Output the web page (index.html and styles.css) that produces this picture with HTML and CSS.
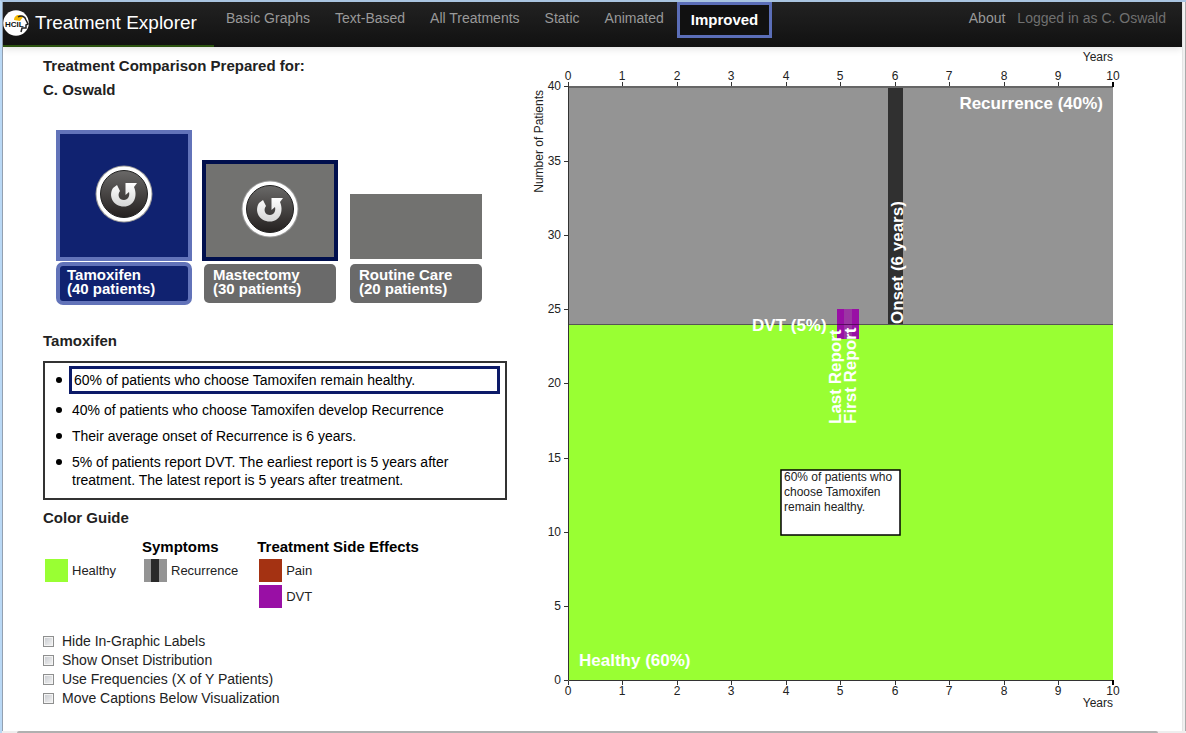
FILE: index.html
```html
<!DOCTYPE html>
<html lang="en">
<head>
<meta charset="utf-8">
<title>Treatment Explorer</title>
<link rel="stylesheet" href="styles.css">
</head>
<body>
<div class="frame">
  <div class="page">
    <header class="navbar">
      <a class="brand" href="#">
        <svg class="logo" width="26" height="26" viewBox="0 0 26 26" aria-hidden="true">
          <circle cx="13" cy="13" r="12.800" fill="#fff"/>
          <path d="M11 10c0-3 2-5 5-5 2 0 3 1 4 2l-3 4z" fill="#f5b800"/>
          <path d="M15 7c3-2 7-1 8 3l2 4-2 1v3h-4l-1 4" fill="none" stroke="#222" stroke-width="1.500"/>
          <text class="logo-text" x="2" y="17">HCIL</text>
        </svg>
        <span>Treatment Explorer</span>
      </a>
      <nav class="nav">
        <a href="#">Basic Graphs</a>
        <a href="#">Text-Based</a>
        <a href="#">All Treatments</a>
        <a href="#">Static</a>
        <a href="#">Animated</a>
        <a class="current" href="#">Improved</a>
      </nav>
      <div class="account"><a href="#">About</a><span>Logged in as C. Oswald</span></div>
    </header>

    <main class="content">
      <section class="panel">
        <h1>Treatment Comparison Prepared for:</h1>
        <h2>C. Oswald</h2>

        <div class="treatments">
          <button class="card chosen" type="button">
            <span class="tile tall"><svg class="replay" viewBox="0 0 58 58" aria-hidden="true">
              <defs><linearGradient id="disc" x1="0" y1="0" x2="0" y2="1"><stop offset="0" stop-color="#6a6968"/><stop offset="1" stop-color="#24201f"/></linearGradient>
              <linearGradient id="arrow" x1="0" y1="0" x2="0" y2="1"><stop offset="0" stop-color="#fff"/><stop offset="1" stop-color="#d5d5d5"/></linearGradient></defs>
              <circle cx="29" cy="29" r="28.500" fill="#9a9a9a"/><circle cx="29" cy="29" r="27.500" fill="#fff"/>
              <circle cx="29" cy="29" r="23.500" fill="url(#disc)" stroke="#222" stroke-width="1"/>
              <path d="M18 23L22 20L25 26C22 30 24 35 29 35C33 35 35 31 34 27L30.500 30V18H42L39 22C43 31 39 41.500 29 41.500C18 41.500 13 31 18 23Z" fill="url(#arrow)"/>
            </svg></span>
            <span class="label">Tamoxifen<br>(40 patients)</span>
          </button>
          <button class="card viewed" type="button">
            <span class="tile mid"><svg class="replay" viewBox="0 0 58 58" aria-hidden="true">
              <circle cx="29" cy="29" r="28.500" fill="#9a9a9a"/><circle cx="29" cy="29" r="27.500" fill="#fff"/>
              <circle cx="29" cy="29" r="23.500" fill="url(#disc)" stroke="#222" stroke-width="1"/>
              <path d="M18 23L22 20L25 26C22 30 24 35 29 35C33 35 35 31 34 27L30.500 30V18H42L39 22C43 31 39 41.500 29 41.500C18 41.500 13 31 18 23Z" fill="url(#arrow)"/>
            </svg></span>
            <span class="label">Mastectomy<br>(30 patients)</span>
          </button>
          <button class="card" type="button">
            <span class="tile short"></span>
            <span class="label">Routine Care<br>(20 patients)</span>
          </button>
        </div>

        <h2 class="detail-title">Tamoxifen</h2>
        <ul class="captions">
          <li class="active"><div>60% of patients who choose Tamoxifen remain healthy.</div></li>
          <li>40% of patients who choose Tamoxifen develop Recurrence</li>
          <li>Their average onset of Recurrence is 6 years.</li>
          <li>5% of patients report DVT. The earliest report is 5 years after treatment. The latest report is 5 years after treatment.</li>
        </ul>

        <h2 class="guide-title">Color Guide</h2>
        <div class="legend">
          <div class="group"><h3></h3><div class="key"><i class="swatch healthy"></i>Healthy</div></div>
          <div class="group"><h3>Symptoms</h3><div class="key"><i class="swatch recurrence"></i>Recurrence</div></div>
          <div class="group"><h3>Treatment Side Effects</h3><div class="key"><i class="swatch pain"></i>Pain</div><div class="key"><i class="swatch dvt"></i>DVT</div></div>
        </div>

        <div class="options">
          <label><input type="checkbox">Hide In-Graphic Labels</label>
          <label><input type="checkbox">Show Onset Distribution</label>
          <label><input type="checkbox">Use Frequencies (X of Y Patients)</label>
          <label><input type="checkbox">Move Captions Below Visualization</label>
        </div>
      </section>

      <section class="chart">
        <svg viewBox="0 0 652 680" role="img" aria-label="Tamoxifen outcomes over ten years">
          <g transform="translate(38 39)">
            <rect width="545" height="238" fill="#949494"/>
            <rect y="238" width="545" height="356" fill="#99ff33"/>
            <rect x="320" width="15" height="238" fill="#303030"/>
            <path d="M0 238.500H545" stroke="#555"/>
            <rect x="269" y="223" width="22" height="30" fill="#990fa5"/>
            <rect x="276" y="223" width="8" height="30" fill="#9b35a3"/>
            <path d="M269 238.500H291" stroke="#5a0a62"/>
            <path d="M0 1H545" stroke="#666" stroke-width="2"/>
            <path d="M0.500 0V594.500H545" fill="none" stroke="#333"/>
            <path stroke="#333" d="M0.500-4V0M54.500-4V0M109.500-4V0M163.500-4V0M218.500-4V0M272.500-4V0M327.500-4V0M381.500-4V0M436.500-4V0M490.500-4V0M0.500 595V599M54.500 595V599M109.500 595V599M163.500 595V599M218.500 595V599M272.500 595V599M327.500 595V599M381.500 595V599M436.500 595V599M490.500 595V599M-4 0.500H0M-4 75.500H0M-4 149.500H0M-4 223.500H0M-4 297.500H0M-4 372.500H0M-4 446.500H0M-4 520.500H0M-4 594.500H0"/>
            <path d="M545-4V1M545 594V599" stroke="#000" stroke-width="2"/>
            <g class="tick middle">
              <text x="0" y="-6">0</text><text x="54" y="-6">1</text><text x="109" y="-6">2</text><text x="163" y="-6">3</text><text x="218" y="-6">4</text><text x="272" y="-6">5</text><text x="327" y="-6">6</text><text x="381" y="-6">7</text><text x="436" y="-6">8</text><text x="490" y="-6">9</text><text x="545" y="-6">10</text>
              <text x="0" y="609">0</text><text x="54" y="609">1</text><text x="109" y="609">2</text><text x="163" y="609">3</text><text x="218" y="609">4</text><text x="272" y="609">5</text><text x="327" y="609">6</text><text x="381" y="609">7</text><text x="436" y="609">8</text><text x="490" y="609">9</text><text x="545" y="609">10</text>
            </g>
            <g class="tick end">
              <text x="-7" y="4">40</text><text x="-7" y="79">35</text><text x="-7" y="153">30</text><text x="-7" y="227">25</text><text x="-7" y="301">20</text><text x="-7" y="376">15</text><text x="-7" y="450">10</text><text x="-7" y="524">5</text><text x="-7" y="598">0</text>
              <text x="545" y="-25">Years</text><text x="545" y="621">Years</text>
              <text transform="translate(-25 4) rotate(-90)">Number of Patients</text>
            </g>
            <g class="mark">
              <text class="end" x="535" y="23">Recurrence (40%)</text>
              <text x="11" y="580">Healthy (60%)</text>
              <text x="184" y="245">DVT (5%)</text>
              <text transform="translate(335 238) rotate(-90)">Onset (6 years)</text>
              <text transform="translate(273 338) rotate(-90)">Last Report</text>
              <text transform="translate(288 338) rotate(-90)">First Report</text>
            </g>
            <rect x="213" y="384" width="119" height="65" fill="#fff" stroke="#000" stroke-width="1.500"/>
            <g class="tick"><text x="216" y="395">60% of patients who</text><text x="216" y="410">choose Tamoxifen</text><text x="216" y="425">remain healthy.</text></g>
          </g>
        </svg>
      </section>
    </main>
  </div>
  <div class="gutter"></div>
</div>
<div class="scroll-edge"><div class="thumb"></div></div>
</body>
</html>
```
FILE: styles.css
```css
* { box-sizing: border-box; }
body {
  margin: 0;
  min-height: 100vh;
  display: flex;
  flex-direction: column;
  border-top: 2px solid #a9c4e0;
  border-left: 2px solid #b9d8f5;
  background: #fff;
  color: #222;
  font: 14px/18px "Liberation Sans", Arial, sans-serif;
}
a { color: inherit; text-decoration: none; }
h1, h2, h3 { margin: 0; font-size: 15px; line-height: 24px; font-weight: bold; }
.frame { flex: 1; display: flex; border-left: 1px solid #93a0b0; }
.page { flex: 1; min-width: 0; }
.gutter { width: 4px; background: #f0f0f0; border-left: 1px solid #e4e4e4; border-right: 1px solid #aaa; }

.navbar {
  display: flex;
  align-items: flex-start;
  height: 45px;
  background: linear-gradient(#222, #111);
  box-shadow: 0 1px 8px rgba(0, 0, 0, 0.15);
  color: #999;
}
.brand {
  display: flex;
  gap: 6px;
  width: 211px;
  height: 45px;
  padding-bottom: 1px;
  align-items: center;
  border-bottom: 2px solid #2c5410;
  color: #fff;
  font-size: 19px;
  white-space: nowrap;
}
.logo-text { font-size: 8px; font-weight: bold; fill: #111; }
.nav { display: flex; gap: 1px; white-space: nowrap; }
.nav a { padding: 7px 12px; }
.nav .current {
  padding: 6px 11px;
  height: 36px;
  border: 3px solid #5b6eb8;
  background: #111;
  color: #fff;
  font-size: 15px;
  font-weight: bold;
}
.account { display: flex; gap: 12px; margin-left: auto; padding: 7px 16px; white-space: nowrap; }
.account span { color: #707070; }

.content { display: grid; grid-template-columns: 527px 1fr; }
.panel { padding: 7px 23px 0 40px; }
.chart { min-width: 0; }
.chart svg { display: block; width: 100%; height: auto; }
.tick { font-size: 12px; fill: #222; }
.mark { font-size: 17px; font-weight: bold; fill: #fff; }
.middle { text-anchor: middle; }
.end { text-anchor: end; }

.treatments {
  display: grid;
  grid-template-columns: repeat(3, 136px);
  gap: 10px;
  align-items: end;
  margin: 28px 0 0 13px;
}
.card {
  display: flex;
  flex-direction: column;
  gap: 1px;
  padding: 0;
  border: 0;
  background: none;
  color: #fff;
  font: bold 15px/14px "Liberation Sans", Arial, sans-serif;
  text-align: left;
}
.tile {
  display: flex;
  align-items: center;
  justify-content: center;
  padding-bottom: 3px;
  border: 2px solid transparent;
  background: #727270;
  background-clip: padding-box;
}
.tall { height: 131px; }
.mid { height: 101px; }
.short { height: 69px; }
.label {
  height: 43px;
  padding: 4px 9px;
  border: 2px solid transparent;
  border-radius: 7px;
  background: #6a6a6a;
  background-clip: padding-box;
}
.chosen .tile, .chosen .label { border: 4px solid #6273b9; background: #102270; }
.chosen .label { padding: 2px 7px; }
.viewed .tile { border: 4px solid #000f4d; }
.replay { width: 58px; height: 58px; }

.detail-title { margin-top: 24px; }
.captions {
  display: flex;
  flex-direction: column;
  gap: 8px;
  margin: 8px 0 0;
  padding: 3px 5px 9px 11px;
  border: 2px solid #333;
  color: #000;
  list-style: none;
}
.captions li { display: flex; gap: 10px; }
.captions li::before {
  content: "";
  flex: none;
  width: 6px;
  height: 6px;
  margin-top: 6px;
  border-radius: 50%;
  background: #000;
}
.captions .active { gap: 7px; align-items: center; margin-bottom: -1px; }
.captions .active::before { margin-top: 0; }
.active div { flex: 1; padding: 2px; border: 3px solid #0c1a68; }
.guide-title { margin-top: 6px; }
.legend { display: flex; gap: 19px; margin-top: 7px; color: #222; font-size: 13px; }
.group { display: flex; flex-direction: column; gap: 3px; min-width: 80px; }
.group h3 { height: 19px; line-height: 19px; color: #000; }
.key { display: flex; align-items: center; gap: 4px; height: 23px; padding-left: 2px; }
.swatch { width: 23px; height: 23px; }
.healthy { background: #99ff33; }
.recurrence { background: linear-gradient(90deg, #949494 7px, #292929 7px 15px, #949494 15px); }
.pain { background: #a43212; }
.dvt { background: #990fa5; }

.options { display: flex; flex-direction: column; margin-top: 24px; }
.options label { display: flex; align-items: center; gap: 8px; line-height: 19px; }
.options input {
  appearance: none;
  width: 11px;
  height: 11px;
  margin: 0;
  border: 1px solid #8e8f8f;
  background: linear-gradient(135deg, #c6c9ce, #f4f4f4);
  box-shadow: inset 0 0 0 1px #f4f4f4;
}

.scroll-edge { height: 2px; background: #eee; padding: 0 28px 0 15px; }
.thumb { height: 2px; background: #b0b0b0; border-radius: 2px 2px 0 0; }
```
